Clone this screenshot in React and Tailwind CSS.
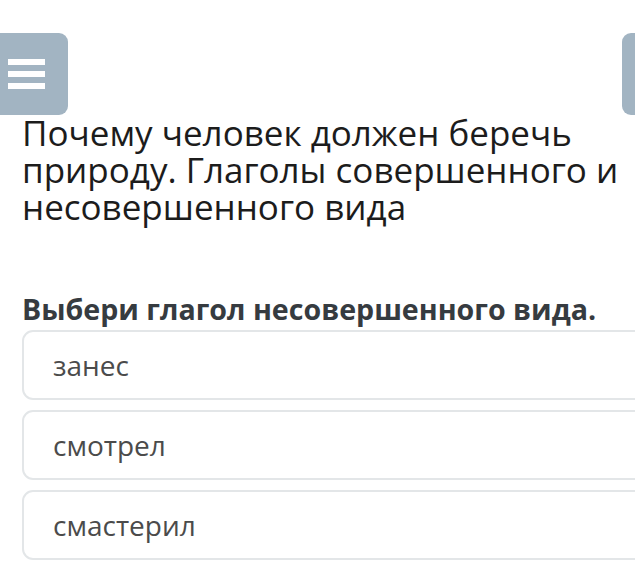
import React from "react";

const options = ["занес", "смотрел", "смастерил"];

const App = () => {
  return (
    <div className="w-[635px] h-[562px] overflow-hidden bg-white font-['Open_Sans',sans-serif]">
      <div className="flex justify-between pt-[33px]">
        <button className="w-[68px] h-[82px] rounded-r-[9px] bg-[#a2b4c2] flex flex-col justify-center gap-[6px] pl-[8px]">
          <span className="block w-[37px] h-[6px] bg-white"></span>
          <span className="block w-[37px] h-[6px] bg-white"></span>
          <span className="block w-[37px] h-[6px] bg-white"></span>
        </button>
        <button className="w-[68px] h-[82px] -mr-[55px] rounded-[9px] bg-[#a2b4c2]"></button>
      </div>

      <div className="pl-[22px] -mr-[40px]">
        <h1 className="-mt-[1px] text-[35px] leading-[37px] text-[#1c1c1c]">
          Почему человек должен беречь природу. Глаголы совершенного и несовершенного вида
        </h1>

        <p className="mt-[67px] text-[28.6px] leading-[34px] font-bold text-[#363b40]">
          Выбери глагол несовершенного вида.
        </p>

        <div className="mt-[4px] flex flex-col gap-[10px]">
          {options.map((opt) => (
            <div
              key={opt}
              className="h-[70px] w-[700px] border-2 border-[#e3e6e8] rounded-[11px] flex items-center pl-[29px] text-[28px] text-[#4b4b4b]"
            >
              {opt}
            </div>
          ))}
        </div>
      </div>
    </div>
  );
};

export default App;
